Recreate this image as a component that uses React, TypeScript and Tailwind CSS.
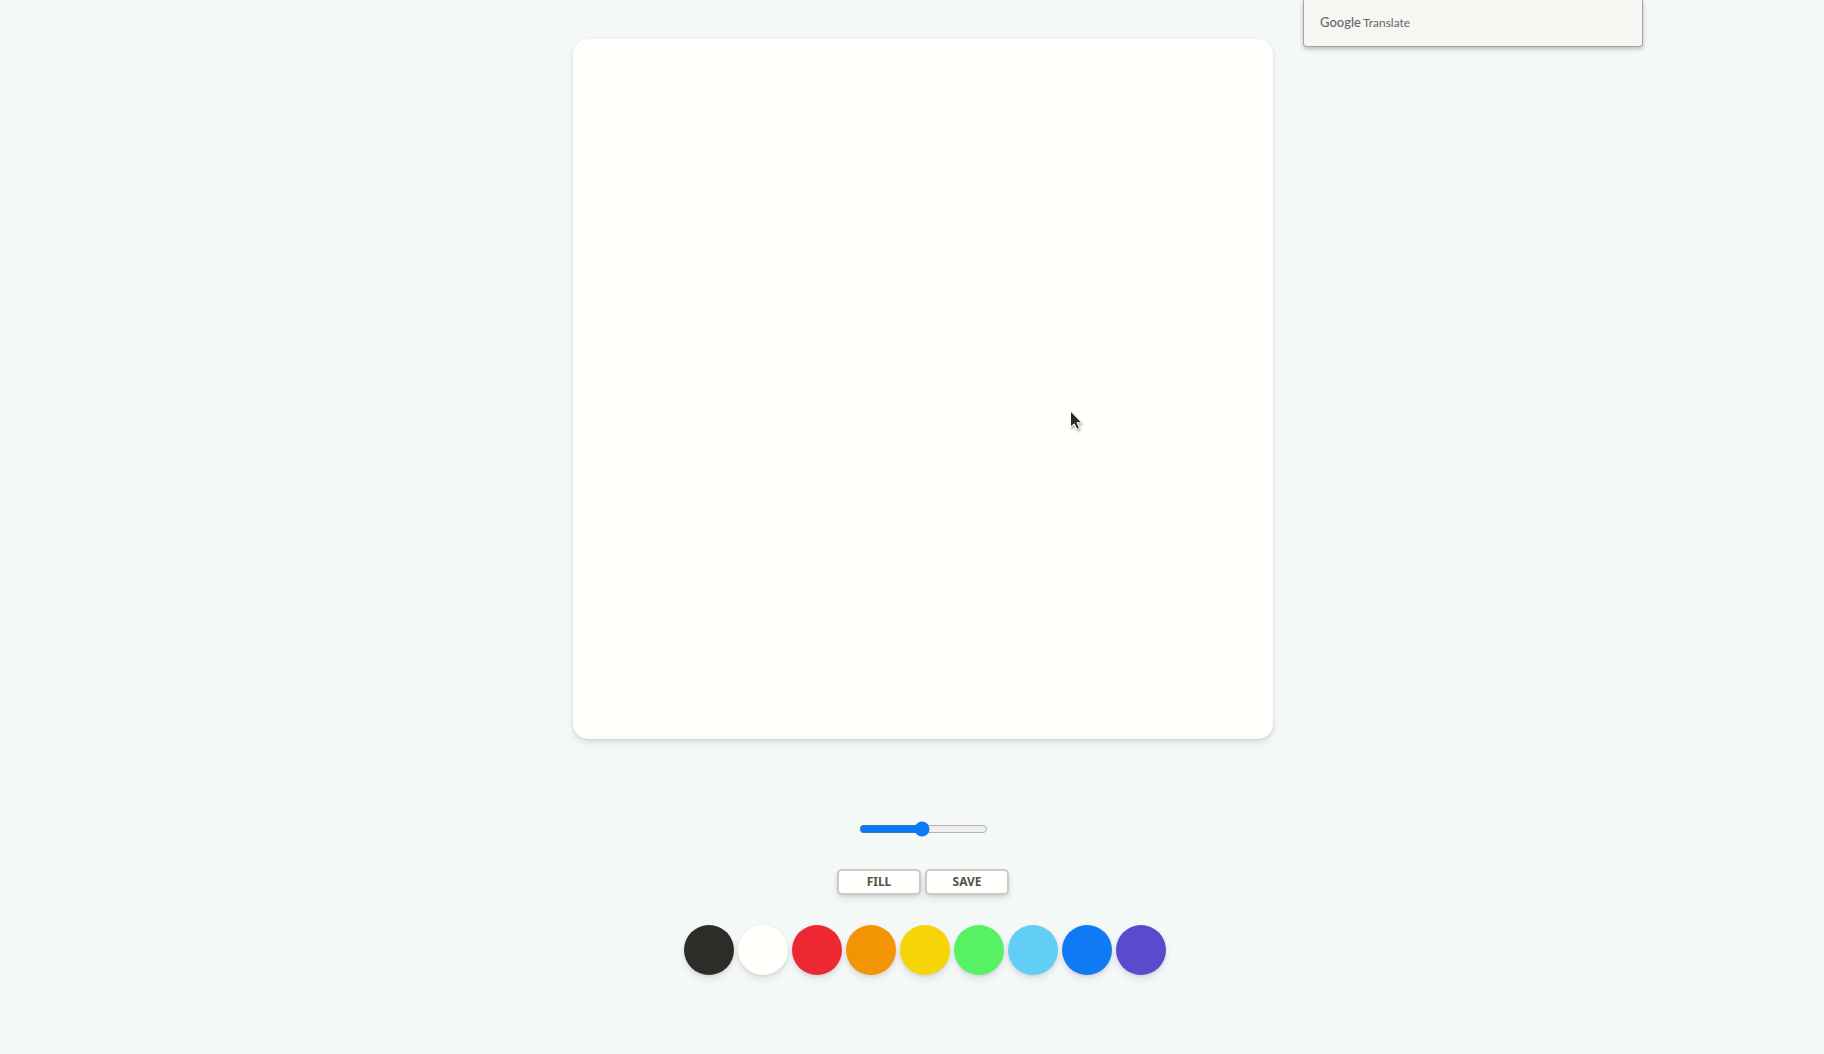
import { useState } from "react";

const COLORS = [
  { name: "Black", bg: "bg-[#2c2c28]" },
  { name: "White", bg: "bg-[#fffffc]" },
  { name: "Red", bg: "bg-[#ee2832]" },
  { name: "Orange", bg: "bg-[#f29404]" },
  { name: "Yellow", bg: "bg-[#f5d507]" },
  { name: "Green", bg: "bg-[#56f264]" },
  { name: "Sky blue", bg: "bg-[#62cef5]" },
  { name: "Blue", bg: "bg-[#107af5]" },
  { name: "Violet", bg: "bg-[#594bcb]" },
];

const SHADOW =
  "shadow-[0_4px_6px_rgba(50,50,93,0.11),0_1px_3px_rgba(0,0,0,0.08)]";

function TranslatePopup() {
  return (
    <aside className="absolute top-0 right-[181px] flex h-[47px] w-[340px] items-center rounded-b border border-t-0 border-[#a4a8a4] bg-[#f6f7f2] px-4 shadow-[0_2px_4px_rgba(0,0,0,0.25)]">
      <p className="flex items-baseline gap-0.5 font-['Lato',sans-serif] text-xs text-[#65686c]">
        <span className="text-[13px] font-medium">Google</span>
        <span>Translate</span>
      </p>
    </aside>
  );
}

function Pointer() {
  return (
    <svg
      className="pointer-events-none absolute top-[370px] left-[495px] h-6 w-4 drop-shadow-[1px_2px_1px_rgba(0,0,0,0.3)]"
      viewBox="0 0 16 24"
      aria-hidden="true"
    >
      <path
        d="M2.5 2v16l3.8-3.2 2.6 5.6 2.6-1.2-2.5-5.5h4.8z"
        fill="#2a2a28"
        stroke="#fff"
        strokeWidth="1"
      />
    </svg>
  );
}

function ActionButton({ children, onClick }: { children: string; onClick?: () => void }) {
  return (
    <button
      type="button"
      onClick={onClick}
      className={`h-[26px] w-[84px] rounded-[5px] border-2 border-[#cacaca] bg-[#fffffc] font-['Noto_Sans',sans-serif] text-xs font-bold text-[#525250] uppercase ${SHADOW}`}
    >
      {children}
    </button>
  );
}

export default function App() {
  const [size, setSize] = useState("2.5");
  const [filling, setFilling] = useState(false);

  return (
    <div className="relative min-h-screen bg-[#f4f8f7]">
      <main className="flex flex-col items-center pt-[39px] pl-[22px]">
        <div className="relative">
          <canvas
            width={700}
            height={700}
            className={`block rounded-[15px] bg-[#fffffc] ${SHADOW}`}
          />
          <Pointer />
        </div>
        <div className="mt-20 flex flex-col items-center">
          <input
            type="range"
            aria-label="Brush size"
            min="0.1"
            max="5"
            step="0.1"
            value={size}
            onChange={(e) => setSize(e.target.value)}
            className="m-0.5 h-4 w-[129px] accent-[#0a7af6]"
          />
          <div className="mt-[30px] flex gap-1">
            <ActionButton onClick={() => setFilling(!filling)}>
              {filling ? "Paint" : "Fill"}
            </ActionButton>
            <ActionButton>Save</ActionButton>
          </div>
          <div className="mt-[30px] flex gap-1 pl-1">
            {COLORS.map((c) => (
              <button
                key={c.name}
                type="button"
                aria-label={c.name}
                className={`size-[50px] rounded-full ${c.bg} ${SHADOW}`}
              />
            ))}
          </div>
        </div>
      </main>
      <TranslatePopup />
    </div>
  );
}
